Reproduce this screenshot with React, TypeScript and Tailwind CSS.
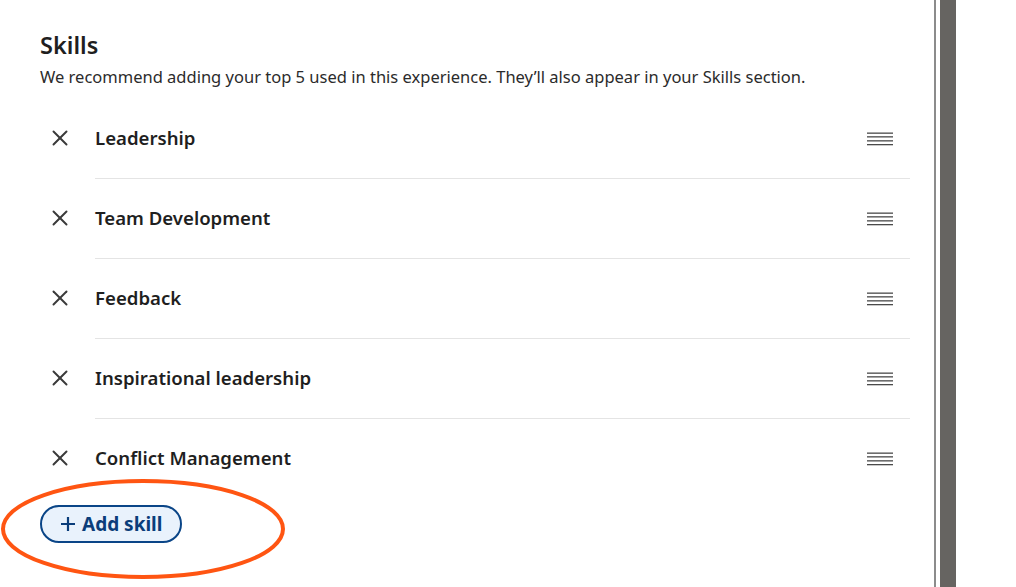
import { X } from 'lucide-react';

const skills = ['Leadership', 'Team Development', 'Feedback', 'Inspirational leadership', 'Conflict Management'];

function DragHandle() {
  return (
    <svg width="26" height="14" viewBox="0 0 26 14" className="shrink-0">
      <rect x="0" y="0.5" width="26" height="1.3" fill="#4a4a4a" />
      <rect x="0" y="4.2" width="26" height="1.3" fill="#4a4a4a" />
      <rect x="0" y="8.2" width="26" height="1.3" fill="#4a4a4a" />
      <rect x="0" y="12" width="26" height="1.3" fill="#4a4a4a" />
    </svg>
  );
}

export default function App() {
  return (
    <div className="relative flex h-[587px] w-[1016px] overflow-hidden bg-white font-['Segoe_UI','Noto_Sans',sans-serif] text-[#1f1f1f]">
      {/* Skills panel */}
      <div className="w-[934px] shrink-0 pl-10 pr-6 pt-[29px]">
        <h2 className="text-[23.5px] font-semibold leading-[32px] text-[#1f1f1f]">Skills</h2>
        <p className="mt-[4px] text-[16.5px] leading-[24px] text-[#2b2b2b]">
          We recommend adding your top 5 used in this experience. They’ll also appear in your Skills section.
        </p>

        <div className="mt-[10px]">
          {skills.map((skill, index) => (
            <div key={skill} className="flex items-stretch">
              <div className="flex h-[80px] w-[55px] shrink-0 items-center pl-[7px] pb-[2px]">
                <X className="h-[26px] w-[26px] text-[#3a3a3a]" strokeWidth={1.8} />
              </div>
              <div
                className={`flex h-[80px] flex-1 items-center justify-between pr-[17px] ${
                  index < skills.length - 1 ? 'border-b border-[#e4e4e4]' : ''
                }`}
              >
                <span className="pb-[2px] text-[18.6px] font-semibold text-[#1f1f1f]">{skill}</span>
                <DragHandle />
              </div>
            </div>
          ))}
        </div>

        <button className="mt-[6px] flex h-[38px] items-center gap-[6px] rounded-full border-2 border-[#0a4587] bg-[#e9f2fc] pl-[18px] pr-[18px] text-[19px] font-bold text-[#0a3d7a]">
          <svg width="16" height="16" viewBox="0 0 16 16">
            <path d="M8 1v14M1 8h14" stroke="#0a3d7a" strokeWidth="2.2" />
          </svg>
          Add skill
        </button>
      </div>

      {/* scrollbar edge */}
      <div className="h-full w-[2px] shrink-0 bg-[#8c8c8c]" />
      <div className="h-full w-[4px] shrink-0 bg-white" />
      <div className="h-full w-[16px] shrink-0 bg-[#666461]" />
      <div className="h-full flex-1 bg-white" />

      {/* annotation */}
      <svg className="pointer-events-none absolute left-0 top-[478px]" width="290" height="104" viewBox="0 0 290 104">
        <ellipse cx="143" cy="51" rx="140" ry="48" fill="none" stroke="#ff5512" strokeWidth="4" />
      </svg>
    </div>
  );
}
